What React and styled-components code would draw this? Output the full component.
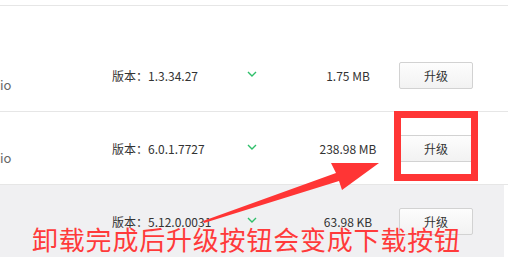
import React from 'react';
import styled, { createGlobalStyle } from 'styled-components';

const GlobalStyle = createGlobalStyle`
    html, body {
        margin: 0;
        padding: 0;
        background: #ffffff;
    }
    body {
        font-family: "Noto Sans CJK SC", "Noto Sans", sans-serif;
        width: 508px;
        height: 273px;
        overflow: hidden;
    }
`;

const Page = styled.div`
    position: relative;
    width: 508px;
    height: 273px;
    overflow: hidden;
`;

const HeaderEdge = styled.div`
    height: 5px;
    border-bottom: 1px solid #e6e6e6;
    margin-bottom: 33px;
`;

const Row = styled.div`
    display: grid;
    grid-template-columns: 112px 135px 10px 40px 102px 74px;
    align-items: center;
    height: 72px;
    width: ${(p) => (p.$muted ? '504px' : '508px')};
    background: ${(p) => (p.$muted ? '#f0f0f2' : '#ffffff')};
    border-bottom: ${(p) => (p.$last ? 'none' : '1px solid #e6e6e6')};
`;

const Name = styled.div`
    font-size: 13px;
    color: #666;
    padding-top: 18px;
    white-space: nowrap;
`;

const Version = styled.div`
    font-size: 12px;
    color: #333;
    white-space: nowrap;
`;

const Chevron = styled.svg`
    display: block;
    width: 10px;
    height: 6px;
    margin-top: -2px;
`;

const Size = styled.div`
    grid-column: 5;
    font-size: 12px;
    color: #333;
    text-align: center;
    white-space: nowrap;
`;

const Button = styled.button`
    width: 74px;
    height: 27px;
    padding: 0;
    border: 1px solid #d2d2d2;
    border-radius: 2px;
    background: linear-gradient(#fdfdfd, #f2f2f2);
    font-family: "Noto Sans CJK SC", sans-serif;
    font-size: 12px;
    color: #333;
`;

const Highlight = styled.div`
    position: absolute;
    left: 394px;
    top: 111px;
    width: 70px;
    height: 56px;
    border: 7px solid #ff3535;
`;

const Arrow = styled.svg`
    position: absolute;
    left: 0;
    top: 0;
    width: 508px;
    height: 273px;
    pointer-events: none;
`;

const Note = styled.div`
    position: absolute;
    left: 32px;
    top: 222px;
    font-size: 26px;
    letter-spacing: 0.8px;
    line-height: 34px;
    color: #ff3a3a;
    white-space: nowrap;
`;

const rows = [
    { name: 'io', version: '版本：1.3.34.27', size: '1.75 MB' },
    { name: 'io', version: '版本：6.0.1.7727', size: '238.98 MB' },
    { name: '', version: '版本：5.12.0.0031', size: '63.98 KB', muted: true },
];

const App = () => (
    <Page>
        <GlobalStyle />
        <HeaderEdge />
        {rows.map((r, i) => (
            <Row key={i} $muted={r.muted} $last={i === rows.length - 1}>
                <Name>{r.name}</Name>
                <Version>{r.version}</Version>
                <Chevron viewBox="0 0 10 6">
                    <path d="M1 1 L5 5 L9 1" fill="none" stroke="#2fbf6a" strokeWidth="1.4" />
                </Chevron>
                <Size>{r.size}</Size>
                <Button>升级</Button>
            </Row>
        ))}
        <Highlight />
        <Arrow viewBox="0 0 508 273">
            <polygon
                points="203,221 336,173 331,163 379,163 342,190 339,181 204,223"
                fill="#ff3535"
            />
        </Arrow>
        <Note>卸载完成后升级按钮会变成下载按钮</Note>
    </Page>
);

export default App;
